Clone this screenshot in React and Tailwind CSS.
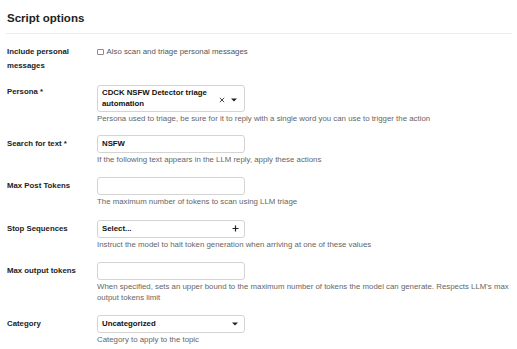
import React from "react";

const font = { fontFamily: '"Liberation Sans", Arial, sans-serif' };

function Caret() {
  return (
    <svg width="6" height="4" viewBox="0 0 6 4" className="shrink-0">
      <path d="M0 0.5 L6 0.5 L3 3.5 Z" fill="#222" />
    </svg>
  );
}

function Cross() {
  return (
    <svg width="6" height="6" viewBox="0 0 6 6" className="shrink-0">
      <path d="M0.8 0.8 L5.2 5.2 M5.2 0.8 L0.8 5.2" stroke="#333" strokeWidth="0.9" />
    </svg>
  );
}

function Plus() {
  return (
    <svg width="7" height="7" viewBox="0 0 7 7" className="shrink-0">
      <path d="M3.5 0.5 V6.5 M0.5 3.5 H6.5" stroke="#222" strokeWidth="1.2" />
    </svg>
  );
}

function Row({ label, labelClass = "pt-[2px]", rowClass = "mb-[12px]", children, desc }) {
  return (
    <div className={`flex ${rowClass}`}>
      <div className={`w-[90px] shrink-0 text-[7.8px] leading-[14px] font-bold text-[#222] ${labelClass}`}>
        {label}
      </div>
      <div className="flex-1 min-w-0">
        {children}
        {desc && (
          <div className="mt-[2px] text-[7.85px] leading-[10.5px] text-[#666]">{desc}</div>
        )}
      </div>
    </div>
  );
}

function Box({ children, className = "" }) {
  return (
    <div
      className={`w-[148px] h-[18px] border border-[#d4d4d4] rounded-[3px] bg-white flex items-center px-[4px] text-[7.8px] text-[#111] ${className}`}
    >
      {children}
    </div>
  );
}

export default function App() {
  return (
    <div style={font} className="w-[517px] h-[349px] bg-white overflow-hidden pl-[7px] pr-[5px]">
      <div className="pt-[11px] pb-[8px] border-b border-[#ececec] -ml-[1px] pl-[1px]">
        <div className="text-[11.5px] leading-[14px] font-bold text-[#222]">Script options</div>
      </div>
      <div className="pt-[11px]">
        <Row label={<>Include personal<br />messages</>} labelClass="">
          <div className="flex items-center h-[14px] gap-[3px]">
            <div className="w-[6.5px] h-[6.5px] border border-[#8a8a8a] rounded-[1px] bg-white" />
            <span className="text-[7.85px] text-[#555]">Also scan and triage personal messages</span>
          </div>
        </Row>
        <Row
          label="Persona *"
          labelClass="pt-0"
          rowClass="mb-[10px]"
          desc="Persona used to triage, be sure for it to reply with a single word you can use to trigger the action"
        >
          <div className="w-[148px] h-[27px] border border-[#d4d4d4] rounded-[3px] bg-white flex items-center pl-[4px] pr-[7px] text-[7.8px] text-[#111]">
            <div className="flex-1 leading-[10.5px] font-semibold">
              CDCK NSFW Detector triage
              <br />
              automation
            </div>
            <div className="flex items-center gap-[6px] mt-[2px]">
              <Cross />
              <Caret />
            </div>
          </div>
        </Row>
        <Row label="Search for text *" desc="If the following text appears in the LLM reply, apply these actions">
          <Box>
            <span className="font-semibold">NSFW</span>
          </Box>
        </Row>
        <Row label="Max Post Tokens" desc="The maximum number of tokens to scan using LLM triage">
          <Box />
        </Row>
        <Row
          label="Stop Sequences"
          desc="Instruct the model to halt token generation when arriving at one of these values"
        >
          <Box className="justify-between pr-[5px]">
            <span className="font-semibold">Select...</span>
            <Plus />
          </Box>
        </Row>
        <Row
          label="Max output tokens"
          desc="When specified, sets an upper bound to the maximum number of tokens the model can generate. Respects LLM's max output tokens limit"
        >
          <Box />
        </Row>
        <Row label="Category" desc="Category to apply to the topic">
          <Box className="justify-between pr-[6px]">
            <span className="font-semibold">Uncategorized</span>
            <Caret />
          </Box>
        </Row>
      </div>
    </div>
  );
}
